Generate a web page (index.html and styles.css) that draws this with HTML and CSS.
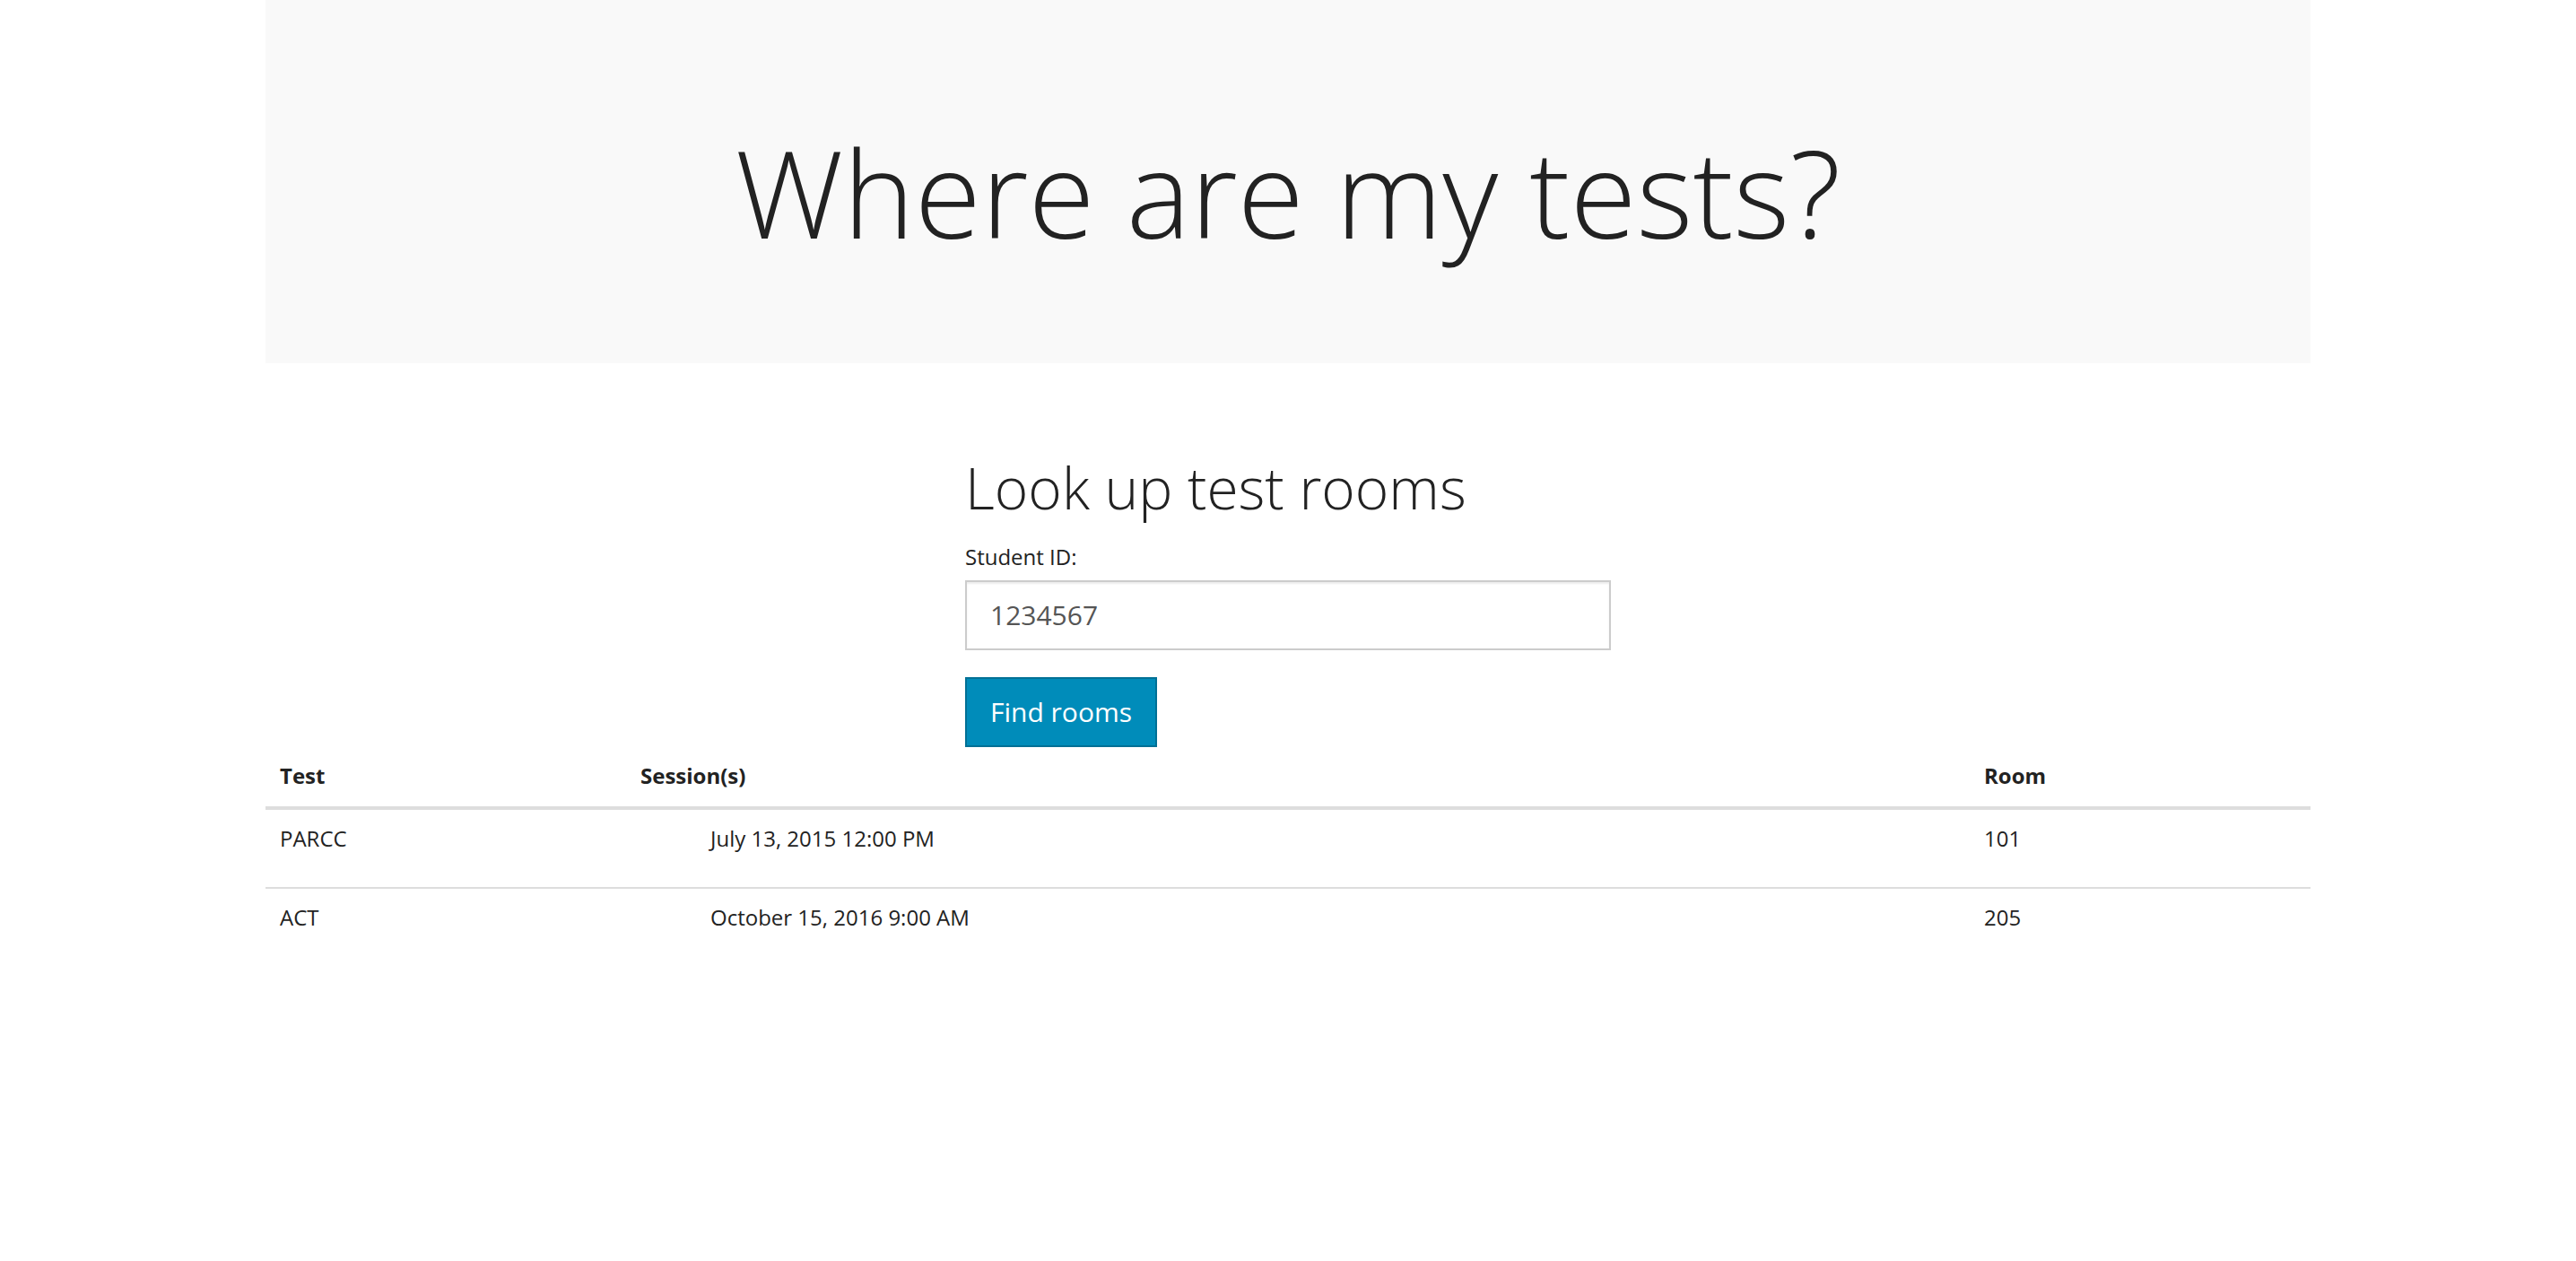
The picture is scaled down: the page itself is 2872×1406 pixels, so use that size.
FILE: index.html
```html
<!DOCTYPE html>
<html lang="en">
<head>
  <meta charset="UTF-8" />
  <meta name="viewport" content="width=device-width, initial-scale=1.0" />
  <title>Where are my tests?</title>
  <link rel="stylesheet" href="styles.css">
</head>
<body>
  <div class="container">
    <header class="jumbotron">
      <h1>Where are my tests?</h1>
    </header>

    <section class="lookup">
      <h1 class="lookup-title">Look up test rooms</h1>
      <form class="lookup-form" id="lookupForm">
        <div class="form-group">
          <label for="studentId">Student ID:</label>
          <input type="text" id="studentId" class="form-control" value="1234567" />
        </div>
        <button type="submit" class="btn-find">Find rooms</button>
      </form>
    </section>

    <table class="rooms-table">
      <colgroup>
        <col class="col-test" />
        <col class="col-sessions" />
        <col class="col-room" />
      </colgroup>
      <thead>
        <tr>
          <th>Test</th>
          <th>Session(s)</th>
          <th>Room</th>
        </tr>
      </thead>
      <tbody>
        <tr>
          <td>PARCC</td>
          <td><ul class="sessions"><li>July 13, 2015 12:00 PM</li></ul></td>
          <td>101</td>
        </tr>
        <tr>
          <td>ACT</td>
          <td><ul class="sessions"><li>October 15, 2016 9:00 AM</li></ul></td>
          <td>205</td>
        </tr>
      </tbody>
    </table>
  </div>

  <script>
    document.getElementById('lookupForm').addEventListener('submit', e => e.preventDefault());
  </script>
</body>
</html>
```

FILE: styles.css
```css
*,*::before,*::after{box-sizing:border-box;}
html,body{margin:0;padding:0;}
body{background:#fff;color:#222;font-family:"Open Sans",Roboto,Arial,sans-serif;font-size:24px;line-height:40px;}

.container{width:2340px;margin:0 auto;padding:0 30px;}

.jumbotron{background:#f9f9f9;padding:96px 120px 100px;margin-bottom:60px;text-align:center;}
.jumbotron h1{margin:44px 0 16px;font-size:135px;line-height:1.1;font-weight:300;color:#222;}

.lookup{width:720px;margin:0 auto;}
.lookup-title{margin:104px 0 22px;font-size:64px;line-height:1.1;font-weight:300;color:#222;}
.form-group{margin-bottom:30px;}
.form-group label{display:inline-block;margin-bottom:6px;font-weight:400;}
.form-control{display:block;width:100%;height:78px;padding:0 26px;border:2px solid #ccc;border-radius:0;font-family:inherit;font-size:30px;color:#555;background:#fff;box-shadow:inset 0 2px 2px rgba(0,0,0,.075);outline:none;}
.btn-find{display:inline-block;height:78px;padding:0 26px;border:2px solid #007095;background:#008cba;color:#fff;font-family:inherit;font-size:30px;line-height:1;cursor:pointer;}

.rooms-table{width:100%;border-collapse:collapse;border-spacing:0;table-layout:fixed;}
.col-test{width:402px;}
.col-room{width:380px;}
.rooms-table th{padding:12px 16px 14px;text-align:left;font-weight:700;vertical-align:bottom;border-bottom:4px solid #ddd;}
.rooms-table td{padding:12px 16px 14px;vertical-align:top;border-top:2px solid #ddd;}
.rooms-table tbody tr:first-child td{border-top:0;}
.sessions{list-style:none;margin:0 0 20px;padding-left:78px;}
```
